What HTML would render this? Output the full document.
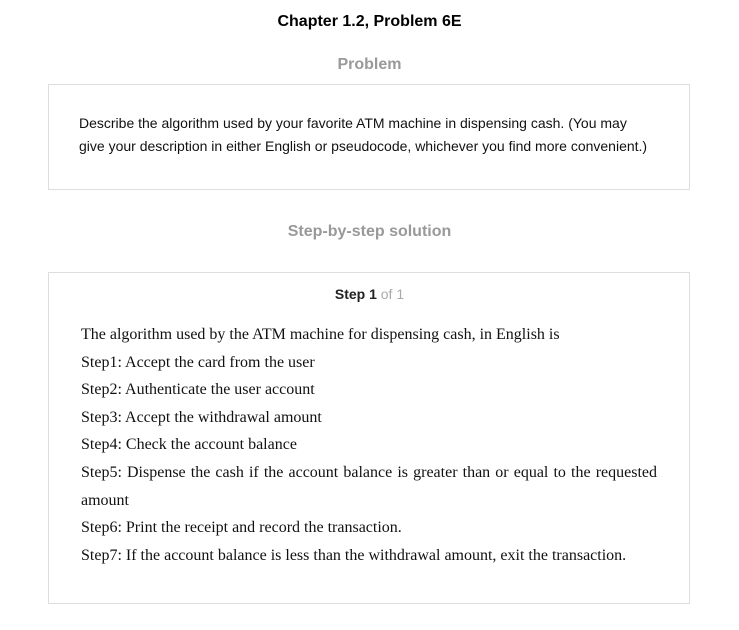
<!DOCTYPE html>
<html><head><style>
body{margin:0;background:#fff;width:739px;height:630px;position:relative;font-family:"Liberation Sans",sans-serif;overflow:hidden}
.a{position:absolute;left:0;width:739px;text-align:center;font-weight:bold;font-size:16px}
.box{position:absolute;left:48px;width:642px;border:1px solid #ddd;box-sizing:border-box}
.p{position:absolute;left:79px;font-size:14px;line-height:23px;color:#111;width:572px}
.s{position:absolute;left:81px;width:576px;font-family:"Liberation Serif",serif;font-size:16px;line-height:27.6px;color:#111;text-align:justify}
.s div{white-space:nowrap}
</style></head><body>
<div class="a" style="top:13px;color:#000">Chapter 1.2, Problem 6E</div>
<div class="a" style="top:56px;color:#999">Problem</div>
<div class="box" style="top:84px;height:106px"></div>
<div class="p" style="top:112px">Describe the algorithm used by your favorite ATM machine in dispensing cash. (You may give your description in either English or pseudocode, whichever you find more convenient.)</div>
<div class="a" style="top:223px;color:#999">Step-by-step solution</div>
<div class="box" style="top:272px;height:332px"></div>
<div class="a" style="top:286px;font-size:14px;color:#222">Step 1 <span style="font-weight:normal;color:#aaa">of 1</span></div>
<div class="s" style="top:321px">
<div>The algorithm used by the ATM machine for dispensing cash, in English is</div>
<div>Step1: Accept the card from the user</div>
<div>Step2: Authenticate the user account</div>
<div>Step3: Accept the withdrawal amount</div>
<div>Step4: Check the account balance</div>
<div style="white-space:normal;text-align-last:left">Step5: Dispense the cash if the account balance is greater than or equal to the requested amount</div>
<div>Step6: Print the receipt and record the transaction.</div>
<div>Step7: If the account balance is less than the withdrawal amount, exit the transaction.</div>
</div>
</body></html>
